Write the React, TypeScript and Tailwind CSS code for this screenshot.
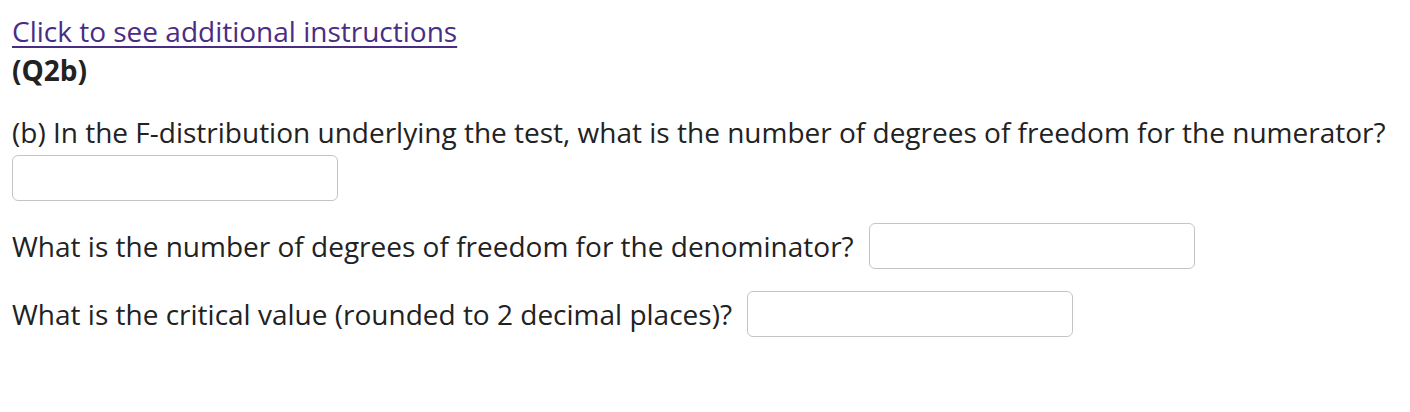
export default function App() {
  return (
    <div className="bg-white px-3 pt-[14px] text-[28px] leading-[35px] text-[#222] [font-family:'Open_Sans',sans-serif]">
      <a href="#" className="text-[#4b2c85] underline decoration-[1.5px] underline-offset-[4px]">
        Click to see additional instructions
      </a>
      <div className="mt-[4px] font-bold">(Q2b)</div>
      <p className="mt-[27px]">
        (b) In the F-distribution underlying the test, what is the number of degrees of freedom for the numerator?
      </p>
      <input type="text" className="mt-[5px] block h-[46px] w-[326px] rounded-[6px] border border-[#c4c4c4] px-2" />
      <div className="mt-[22px] flex items-center gap-[15px]">
        <span>What is the number of degrees of freedom for the denominator?</span>
        <input type="text" className="h-[46px] w-[326px] rounded-[6px] border border-[#c4c4c4] px-2" />
      </div>
      <div className="mt-[22px] flex items-center gap-[15px]">
        <span>What is the critical value (rounded to 2 decimal places)?</span>
        <input type="text" className="h-[46px] w-[326px] rounded-[6px] border border-[#c4c4c4] px-2" />
      </div>
    </div>
  );
}
